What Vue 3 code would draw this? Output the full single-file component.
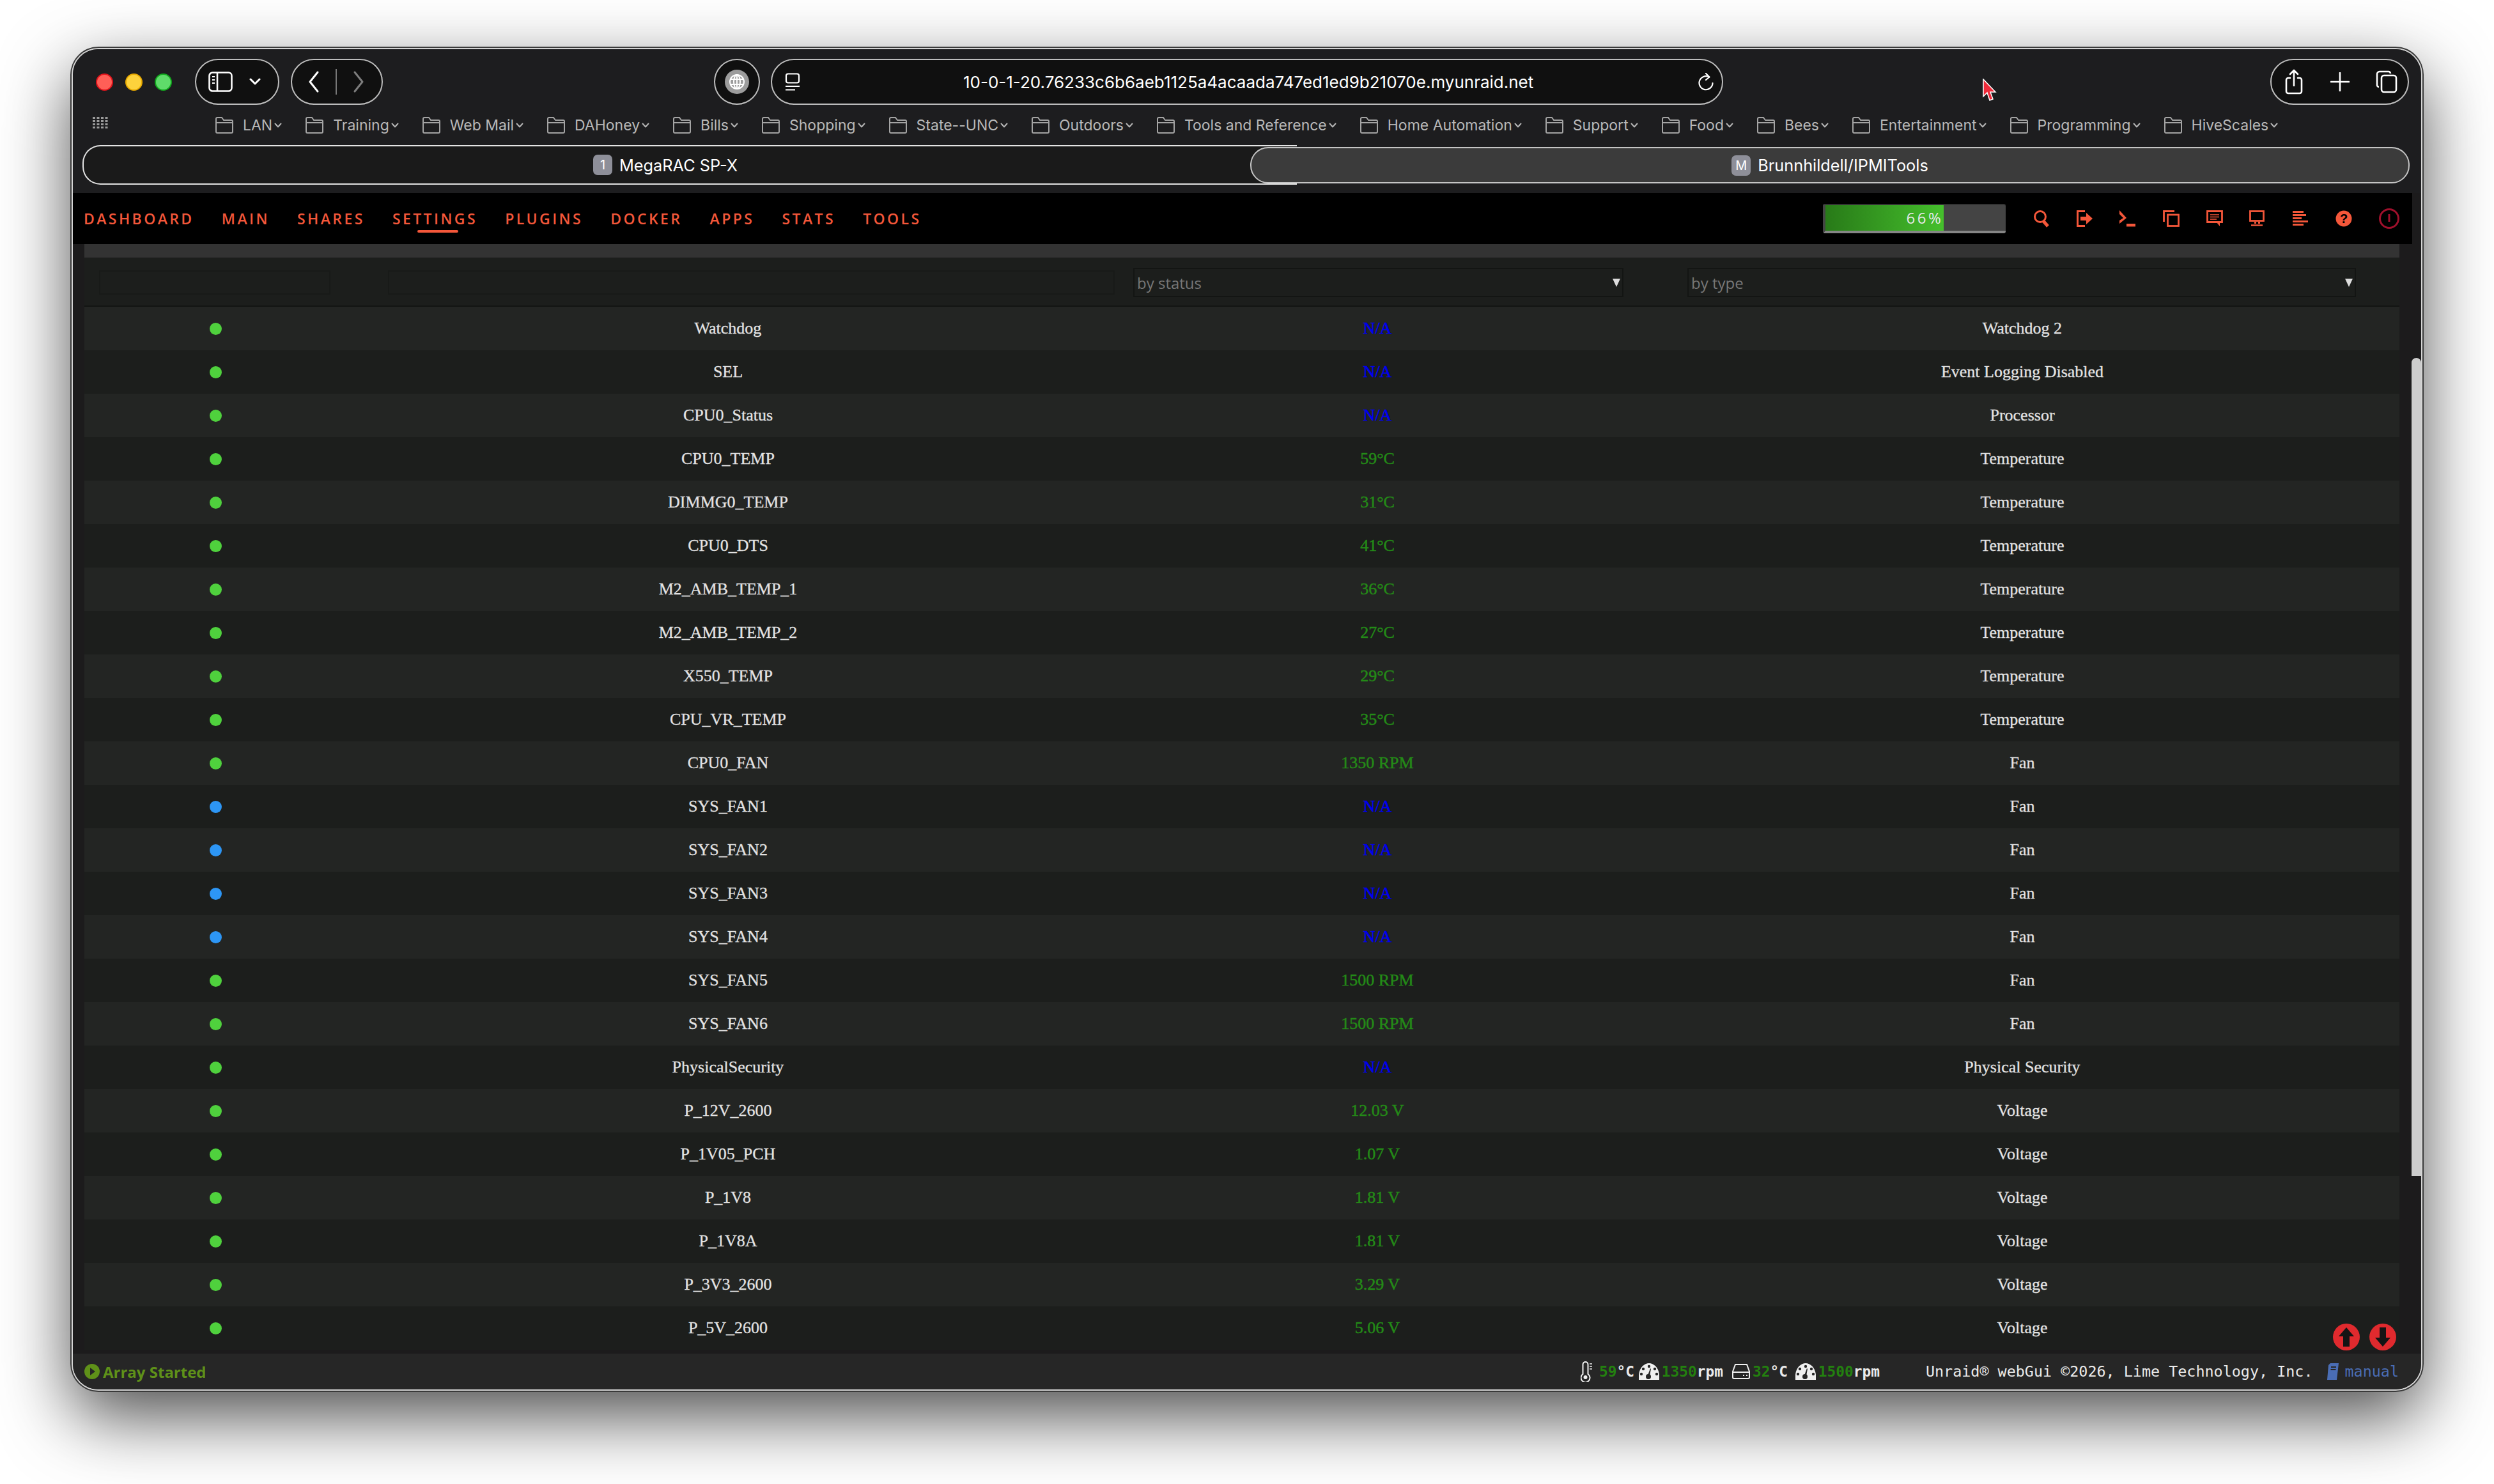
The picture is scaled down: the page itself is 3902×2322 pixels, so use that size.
<script setup>
const bookmarks = ['LAN','Training','Web Mail','DAHoney','Bills','Shopping','State--UNC','Outdoors','Tools and Reference','Home Automation','Support','Food','Bees','Entertainment','Programming','HiveScales']
const nav = ['DASHBOARD','MAIN','SHARES','SETTINGS','PLUGINS','DOCKER','APPS','STATS','TOOLS']
const mk = (name, value, type, off) => ({ name, value, type, off: !!off })
const rows = [
  mk('Watchdog','N/A','Watchdog 2'),
  mk('SEL','N/A','Event Logging Disabled'),
  mk('CPU0_Status','N/A','Processor'),
  mk('CPU0_TEMP','59°C','Temperature'),
  mk('DIMMG0_TEMP','31°C','Temperature'),
  mk('CPU0_DTS','41°C','Temperature'),
  mk('M2_AMB_TEMP_1','36°C','Temperature'),
  mk('M2_AMB_TEMP_2','27°C','Temperature'),
  mk('X550_TEMP','29°C','Temperature'),
  mk('CPU_VR_TEMP','35°C','Temperature'),
  mk('CPU0_FAN','1350 RPM','Fan'),
  mk('SYS_FAN1','N/A','Fan',1),
  mk('SYS_FAN2','N/A','Fan',1),
  mk('SYS_FAN3','N/A','Fan',1),
  mk('SYS_FAN4','N/A','Fan',1),
  mk('SYS_FAN5','1500 RPM','Fan'),
  mk('SYS_FAN6','1500 RPM','Fan'),
  mk('PhysicalSecurity','N/A','Physical Security'),
  mk('P_12V_2600','12.03 V','Voltage'),
  mk('P_1V05_PCH','1.07 V','Voltage'),
  mk('P_1V8','1.81 V','Voltage'),
  mk('P_1V8A','1.81 V','Voltage'),
  mk('P_3V3_2600','3.29 V','Voltage'),
  mk('P_5V_2600','5.06 V','Voltage'),
]
</script>

<template>
  <div class="page">
    <div class="window">
      <div class="toolbar">
        <div class="top-row">
          <div class="lights">
            <span class="light red"></span><span class="light yellow"></span><span class="light green"></span>
          </div>
          <div class="capsule side">
            <svg width="38" height="32" viewBox="0 0 38 32" fill="none" stroke="#fff" stroke-width="2.6">
              <rect x="1.5" y="1.5" width="35" height="29" rx="5"/><path d="M14 2v28"/>
              <path d="M6 8h4M6 13h4M6 18h4" stroke-width="2"/>
            </svg>
            <svg width="18" height="12" viewBox="0 0 18 12" fill="none" stroke="#fff" stroke-width="3" stroke-linecap="round" stroke-linejoin="round"><path d="M2 2l7 7 7-7"/></svg>
          </div>
          <div class="capsule navs">
            <svg width="18" height="36" viewBox="0 0 18 36" fill="none" stroke="#fff" stroke-width="3" stroke-linecap="round" stroke-linejoin="round"><path d="M15 3L3 18l12 15"/></svg>
            <span class="sep"></span>
            <svg width="18" height="36" viewBox="0 0 18 36" fill="none" stroke="#7d7d7d" stroke-width="3" stroke-linecap="round" stroke-linejoin="round"><path d="M3 3l12 15L3 33"/></svg>
          </div>
          <div class="globe-wrap">
            <svg width="38" height="38" viewBox="0 0 38 38" fill="none">
              <circle cx="19" cy="19" r="19" fill="#9c9c9c"/>
              <g stroke="#fff" stroke-width="2"><circle cx="19" cy="19" r="11"/><ellipse cx="19" cy="19" rx="5" ry="11"/><path d="M8 15h22M8 23h22M19 8v22"/></g>
            </svg>
          </div>
          <div class="url">
            <svg class="url-ico" width="24" height="28" viewBox="0 0 24 28" fill="none" stroke="#fff" stroke-width="2.2">
              <rect x="2" y="1.5" width="20" height="14" rx="3"/><path d="M1 21h22M1 26.5h15"/>
            </svg>
            <span class="url-text">10-0-1-20.76233c6b6aeb1125a4acaada747ed1ed9b21070e.myunraid.net</span>
            <svg class="url-re" width="24" height="28" viewBox="0 0 24 28" fill="none" stroke="#fff" stroke-width="2.2" stroke-linecap="round" stroke-linejoin="round">
              <path d="M17 6.5A10.5 10.5 0 1 0 22.5 16"/><path d="M12 1l5.5 5.5L12 11"/>
            </svg>
          </div>
          <div class="cursor-gap"></div>
          <div class="capsule actions">
            <svg width="30" height="40" viewBox="0 0 30 40" fill="none" stroke="#fff" stroke-width="2.6" stroke-linecap="round" stroke-linejoin="round"><path d="M9 14H6a3 3 0 0 0-3 3v18a3 3 0 0 0 3 3h18a3 3 0 0 0 3-3V17a3 3 0 0 0-3-3h-3"/><path d="M15 26V2M9 8l6-6 6 6"/></svg>
            <svg width="30" height="30" viewBox="0 0 30 30" fill="none" stroke="#fff" stroke-width="2.6" stroke-linecap="round"><path d="M15 1v28M1 15h28"/></svg>
            <svg width="34" height="36" viewBox="0 0 34 36" fill="none" stroke="#fff" stroke-width="2.6"><rect x="9" y="8" width="23" height="26" rx="4"/><path d="M5 26a3 3 0 0 1-3-3V6a4 4 0 0 1 4-4h14a3 3 0 0 1 3 3"/></svg>
          </div>
        </div>
        <div class="book-row">
          <svg class="grid" width="24" height="18" viewBox="0 0 24 18" fill="#9b9b9b">
            <g v-for="y in [0,5,10,15]" :key="y"><rect v-for="x in [0,6.5,13,19.5]" :key="x" :x="x" :y="y" width="4" height="3"/></g>
          </svg>
          <div class="books">
            <div class="book" v-for="b in bookmarks" :key="b">
              <svg width="30" height="26" viewBox="0 0 30 26" fill="none" stroke="#a4a4a4" stroke-width="2"><path d="M2 6V3a2 2 0 0 1 2-2h7l3 4h12a2 2 0 0 1 2 2v16a2 2 0 0 1-2 2H4a2 2 0 0 1-2-2z"/><path d="M2 9h26"/></svg>
              <span class="book-name">{{ b }}</span>
              <svg width="12" height="8" viewBox="0 0 12 8" fill="none" stroke="#b5b5b5" stroke-width="2" stroke-linecap="round" stroke-linejoin="round"><path d="M1.5 1.5L6 6.5l4.5-5"/></svg>
            </div>
          </div>
        </div>
        <div class="tabs">
          <div class="tab idle"><span class="badge">1</span><span class="tab-name">MegaRAC SP-X</span></div>
          <div class="tab active"><span class="badge">M</span><span class="tab-name">Brunnhildell/IPMITools</span></div>
        </div>
      </div>

      <header class="head">
        <nav class="nav">
          <a v-for="n in nav" :key="n" :class="['nav-item', { cur: n === 'SETTINGS' }]">{{ n }}</a>
        </nav>
        <div class="meter"><div class="meter-fill">66%</div></div>
        <div class="head-icons">
          <svg width="26" height="28" viewBox="0 0 26 28" fill="none" stroke="#f4573a" stroke-width="3"><circle cx="11" cy="11" r="8.5"/><path d="M16 18l7 8" stroke-width="5"/></svg>
          <svg width="26" height="26" viewBox="0 0 26 26" fill="#f4573a"><path d="M0 0h13v3H3v20h10v3H0z"/><path d="M6 10h9V4l10 9-10 9v-6H6z"/></svg>
          <svg width="26" height="26" viewBox="0 0 26 26" fill="#f4573a"><path d="M0 0l11 12L0 21v-5l6-4-6-6z"/><rect x="11" y="21" width="14" height="4.500"/></svg>
          <svg width="26" height="26" viewBox="0 0 26 26" fill="none" stroke="#f4573a" stroke-width="2.800"><path d="M1.500 18V1.500H18"/><rect x="7.500" y="7" width="17" height="17.500"/></svg>
          <svg width="26" height="26" viewBox="0 0 26 26" fill="none" stroke="#f4573a" stroke-width="2.800"><path d="M1.500 1.500h23v17H1.500z"/><path d="M16 19l5 6v-6z" fill="#f4573a" stroke="none"/><path d="M6 7h14M6 10.500h14M6 14h10" stroke-width="1.600"/></svg>
          <svg width="26" height="26" viewBox="0 0 26 26" fill="none" stroke="#f4573a" stroke-width="2.800"><rect x="1.500" y="1.500" width="21" height="15"/><path d="M8 18h3v3H8zM14 18h3v3h-3z" fill="#f4573a" stroke="none"/><path d="M3 23.500h18" stroke-width="2.400"/></svg>
          <svg width="26" height="24" viewBox="0 0 26 24" fill="#f4573a"><rect width="17" height="3"/><rect y="5" width="21" height="3"/><rect y="10" width="14" height="3"/><rect y="15" width="24" height="3"/><rect y="20" width="17" height="3"/></svg>
          <svg width="26" height="26" viewBox="0 0 26 26"><circle cx="13" cy="13" r="12.500" fill="#f4573a"/><text x="13" y="20" text-anchor="middle" font-family="Liberation Sans, sans-serif" font-weight="700" font-size="20" fill="#000">?</text></svg>
          <svg width="32" height="32" viewBox="0 0 32 32" fill="none" stroke="#a0102c" stroke-width="3"><circle cx="16" cy="16" r="14.500"/><path d="M16 9v12"/></svg>
        </div>
      </header>

      <div class="scroll">
        <div class="content">
          <div class="strip"></div>
          <div class="filters grid-cols">
            <div class="filter-a"><div class="ghost"></div></div>
            <div class="filter-b"><div class="ghost"></div></div>
            <div class="filter-c"><div class="sel"><span>by status</span><i class="tri"></i></div></div>
            <div class="filter-d"><div class="sel"><span>by type</span><i class="tri"></i></div></div>
          </div>
          <div v-for="r in rows" :key="r.name" class="row grid-cols">
            <div class="cell"><span :class="['dot', { off: r.off }]"></span></div>
            <div class="cell">{{ r.name }}</div>
            <div :class="['cell', r.value === 'N/A' ? 'na' : 'val']">{{ r.value }}</div>
            <div class="cell">{{ r.type }}</div>
          </div>
        </div>
        <div class="thumb"></div>
        <div class="jump">
          <svg width="42" height="42" viewBox="0 0 42 42"><circle cx="21" cy="21" r="21" fill="#e02a2e"/><path d="M21 6l12 14h-7v16H16V20H9z" fill="#141414"/></svg>
          <svg width="42" height="42" viewBox="0 0 42 42"><circle cx="21" cy="21" r="21" fill="#e02a2e"/><path d="M21 36L9 22h7V6h10v16h7z" fill="#141414"/></svg>
        </div>
      </div>

      <footer class="foot">
        <svg class="play" width="24" height="24" viewBox="0 0 24 24"><circle cx="12" cy="12" r="12" fill="#5f9119"/><path d="M9 6l8 6-8 6z" fill="#262626"/></svg>
        <span class="started">Array Started</span>
        <div class="stats">
          <svg width="18" height="32" viewBox="0 0 18 32" fill="none" stroke="#f0f0f0" stroke-width="2"><path d="M3.500 20V5a4 4 0 0 1 8 0v15a7 7 0 1 1-8 0z"/><circle cx="7.500" cy="25" r="3" fill="#f0f0f0" stroke="none"/><path d="M14 4h4M14 8h4M14 12h4" stroke-width="1.600"/></svg>
          <span class="stat s1"><b>59</b>°C</span>
          <svg class="gauge g1" width="32" height="26" viewBox="0 0 32 26"><path d="M0 26C-2 10 7 0 16 0s18 10 16 26z" fill="#f0f0f0"/><g fill="#262626"><circle cx="16" cy="5" r="2.200"/><circle cx="7" cy="9" r="2.200"/><circle cx="25" cy="9" r="2.200"/><circle cx="4" cy="17" r="2.200"/><circle cx="28" cy="17" r="2.200"/><circle cx="15" cy="21" r="4"/><path d="M14 19l4-11 1 1-2 11z"/></g></svg>
          <span class="stat s2"><b>1350</b>rpm</span>
          <svg class="hdd" width="28" height="24" viewBox="0 0 28 24" fill="none" stroke="#f0f0f0" stroke-width="2"><path d="M1 12L5 1h18l4 11v9a2 2 0 0 1-2 2H3a2 2 0 0 1-2-2z"/><path d="M1 13h26"/><path d="M17 18h2M22 18h2" stroke-width="2"/></svg>
          <span class="stat s3"><b>32</b>°C</span>
          <svg class="gauge g2" width="32" height="26" viewBox="0 0 32 26"><path d="M0 26C-2 10 7 0 16 0s18 10 16 26z" fill="#f0f0f0"/><g fill="#262626"><circle cx="16" cy="5" r="2.200"/><circle cx="7" cy="9" r="2.200"/><circle cx="25" cy="9" r="2.200"/><circle cx="4" cy="17" r="2.200"/><circle cx="28" cy="17" r="2.200"/><circle cx="15" cy="21" r="4"/><path d="M14 19l4-11 1 1-2 11z"/></g></svg>
          <span class="stat s4"><b>1500</b>rpm</span>
        </div>
        <span class="copy">Unraid® webGui ©2026, Lime Technology, Inc.</span>
        <svg class="book-ico" width="18" height="26" viewBox="0 0 18 26"><path d="M5 0h13l-3 26H0L2 3z" fill="#4a6db5"/><path d="M6 6h8M5.500 10h8" stroke="#262626" stroke-width="2"/></svg>
        <span class="manual">manual</span>
      </footer>

      <svg class="pointer" width="24" height="36" viewBox="0 0 24 36"><path d="M2 1v27l6-6 4 12 5-2-4-11h8z" fill="#ee2a3a" stroke="#fff" stroke-width="1.500"/></svg>
    </div>
  </div>
</template>

<style>
html, body { margin: 0; background: #fff; }
</style>

<style scoped>
.page {
  width: 3902px; height: 2322px; box-sizing: border-box;
  padding: 75px 0 0 112px; background: #fff; overflow: hidden;
}
.window {
  position: relative; width: 3678px; height: 2101px; box-sizing: border-box;
  border: 2px solid #d4d4d4; border-radius: 42px; overflow: hidden;
  display: flex; flex-direction: column; background: #1c1b1c;
  box-shadow: 0 0 0 2px #3a3a3a, 0 40px 110px rgba(0,0,0,.7);
  font-family: Inter, "Liberation Sans", sans-serif;
}
.toolbar { height: 225px; flex: none; background: #1d1d1f; box-sizing: border-box; padding-top: 15px; }
.top-row { height: 72px; display: flex; align-items: center; }
.lights { display: flex; gap: 19px; margin-left: 36px; width: 155px; }
.light { width: 27px; height: 27px; border-radius: 50%; box-sizing: border-box; }
.red { background: #ff5f57; border: 2px solid #e0141c; }
.yellow { background: #fdd23c; border: 2px solid #e6a800; }
.green { background: #5fdc6a; border: 2px solid #12a81e; }
.capsule {
  height: 72px; box-sizing: border-box; border: 2px solid #bdbdbd; border-radius: 36px;
  background: #101010; display: flex; align-items: center;
}
.side { width: 132px; padding-left: 19px; gap: 26px; }
.navs { width: 144px; margin-left: 18px; padding-left: 25px; gap: 25px; }
.sep { width: 2px; height: 40px; background: #777; }
.globe-wrap {
  width: 72px; height: 72px; box-sizing: border-box; border: 2px solid #bdbdbd; border-radius: 50%;
  background: #101010; display: flex; align-items: center; justify-content: center; margin-left: 518px;
}
.url {
  width: 1490px; height: 72px; margin-left: 17px; box-sizing: border-box; border: 2px solid #bdbdbd;
  border-radius: 36px; background: #101010; display: flex; align-items: center; position: relative;
}
.url-ico { margin-left: 20px; }
.url-text { margin-left: 255px; width: 1100px; color: #fff; font-size: 26px; white-space: nowrap; }
.url-re { margin-left: auto; margin-right: 13px; }
.cursor-gap { width: 856px; }
.actions { width: 217px; padding: 0 16px 0 20px; justify-content: space-between; }
.book-row { height: 64px; display: flex; align-items: center; position: relative; }
.grid { margin-left: 31px; margin-top: -8px; }
.books { display: flex; gap: 36px; margin-left: 167px; }
.book { display: flex; align-items: center; }
.book-name { color: #b9b9b9; font-size: 23px; margin-left: 14px; margin-right: 3px; white-space: nowrap; }
.tabs { position: relative; height: 62px; margin: -1px 18px 0 15px; }
.tab {
  position: absolute; top: 0; box-sizing: border-box; display: flex; align-items: center; justify-content: center;
}
.idle {
  left: 0; width: 1900px; height: 62px; border: 2px solid #e4e4e4; border-radius: 28px 0 0 28px;
  border-right: none; padding-right: 78px; background: #1a1a1a;
}
.active {
  left: 1827px; right: 0; top: 3px; height: 57px; border: 2px solid #c4c4c4; border-radius: 28px; background: #3b3b3b;
}
.badge {
  width: 30px; height: 32px; border-radius: 7px; background: #8e8f99; color: #fff;
  font-size: 20px; display: flex; align-items: center; justify-content: center;
}
.tab-name { color: #fff; font-size: 25.300px; margin-left: 11px; white-space: nowrap; }

.head { height: 80px; flex: none; background: #000; display: flex; align-items: center; margin-right: 14px; position: relative; }
.nav { display: flex; gap: 43.200px; margin-left: 17px; }
.nav-item {
  color: #f4573a; font-family: "Open Sans", sans-serif; font-weight: 600; font-size: 23px; letter-spacing: 3.400px;
  position: relative; line-height: 30px; white-space: nowrap;
}
.cur::after {
  content: ""; position: absolute; left: 39px; width: 64px; height: 4px; bottom: -7px; background: #f4573a; border-radius: 2px;
}
.meter {
  margin-left: auto; margin-right: -2px; width: 286px; height: 46px; box-sizing: border-box; background: #444;
  border-bottom: 4px solid #858585; border-top: 2px solid #333; border-left: 4px solid #444; border-radius: 3px;
}
.meter-fill {
  width: 185px; height: 40px; background: linear-gradient(90deg, #287a18, #45bf2c); color: #e8e8e8;
  font-family: "Open Sans", sans-serif; font-size: 24px; letter-spacing: 3.500px; line-height: 40px; text-align: right;
  padding-right: 1px; box-sizing: border-box;
}
.head-icons { display: flex; align-items: center; gap: 41.600px; margin-left: 45px; margin-right: 20px; }

.scroll { position: relative; height: 1736px; flex: none; overflow: hidden; }
.content { margin-left: 18px; width: 3622px; background: #262726; }
.strip { height: 21px; background: #333; }
.grid-cols { display: grid; grid-template-columns: 410px 1194px 838px 1fr; }
.filters { height: 77px; box-sizing: border-box; background: #1c1e1c; border-bottom: 2px solid #131513; }
.filter-a, .filter-b { padding-top: 20px; }
.filter-a .ghost { width: 362px; margin-left: 23px; height: 38px; border: 2px solid #181a18; box-sizing: border-box; }
.filter-b .ghost { width: 1137px; margin-left: 65px; height: 38px; border: 2px solid #181a18; box-sizing: border-box; }
.filter-c, .filter-d { padding-top: 16px; }
.filter-c .sel { margin-left: 37px; width: 767px; }
.filter-d .sel { margin-left: 66px; width: 1046px; }
.sel {
  height: 46px; box-sizing: border-box; border: 2px solid #131513; display: flex; align-items: center;
  padding-left: 4px; justify-content: space-between; color: #777; font-family: "Open Sans", sans-serif; font-size: 24px;
}
.tri { width: 0; height: 0; border-left: 6px solid transparent; border-right: 6px solid transparent; border-top: 13px solid #ddd; margin-right: 3px; }
.row {
  height: 68px; font-family: "Liberation Serif", serif; font-size: 26px; color: #e3e3e3; background: #1c1e1c;
  -webkit-text-stroke: 0.3px currentColor;
}
.row:nth-child(odd) { background: #232523; }
.cell { display: flex; align-items: center; justify-content: center; white-space: nowrap; }
.dot { width: 19px; height: 19px; border-radius: 50%; background: #4fd13d; }
.dot.off { background: #2d96f5; }
.na { color: #0000f0; -webkit-text-stroke: 0.6px currentColor; }
.val { color: #238a17; -webkit-text-stroke: 0.5px currentColor; }
.thumb { position: absolute; right: 0; top: 178px; width: 15px; height: 1280px; background: #cdcdcd; border-radius: 8px 8px 0 0; }
.jump { position: absolute; left: 3536px; top: 1689px; display: flex; gap: 15px; }

.foot {
  flex: 1; background: #262626; display: flex; align-items: center; position: relative;
  font-family: "DejaVu Sans Mono", monospace; font-size: 23.400px; color: #eaeaea; padding-right: 35px; white-space: nowrap;
}
.play { margin-left: 18px; }
.started { color: #5f9119; font-family: "Open Sans", sans-serif; font-weight: 700; font-size: 24px; margin-left: 5px; }
.stats { display: flex; align-items: center; margin-left: auto; margin-right: 72px; }
.stat { font-weight: 700; font-size: 22.800px; margin-left: 4px; }
.s1 { margin-left: 11px; }
.stat b { color: #23800f; }
.gauge { margin-left: 12px; }
.g1 { margin-left: 7px; }
.hdd { margin-left: 14px; }
.copy { font-size: 23.400px; }
.book-ico { margin-left: 22px; }
.manual { color: #4a6db5; margin-left: 10px; }
.pointer { position: absolute; left: 2987px; top: 46px; }
</style>
